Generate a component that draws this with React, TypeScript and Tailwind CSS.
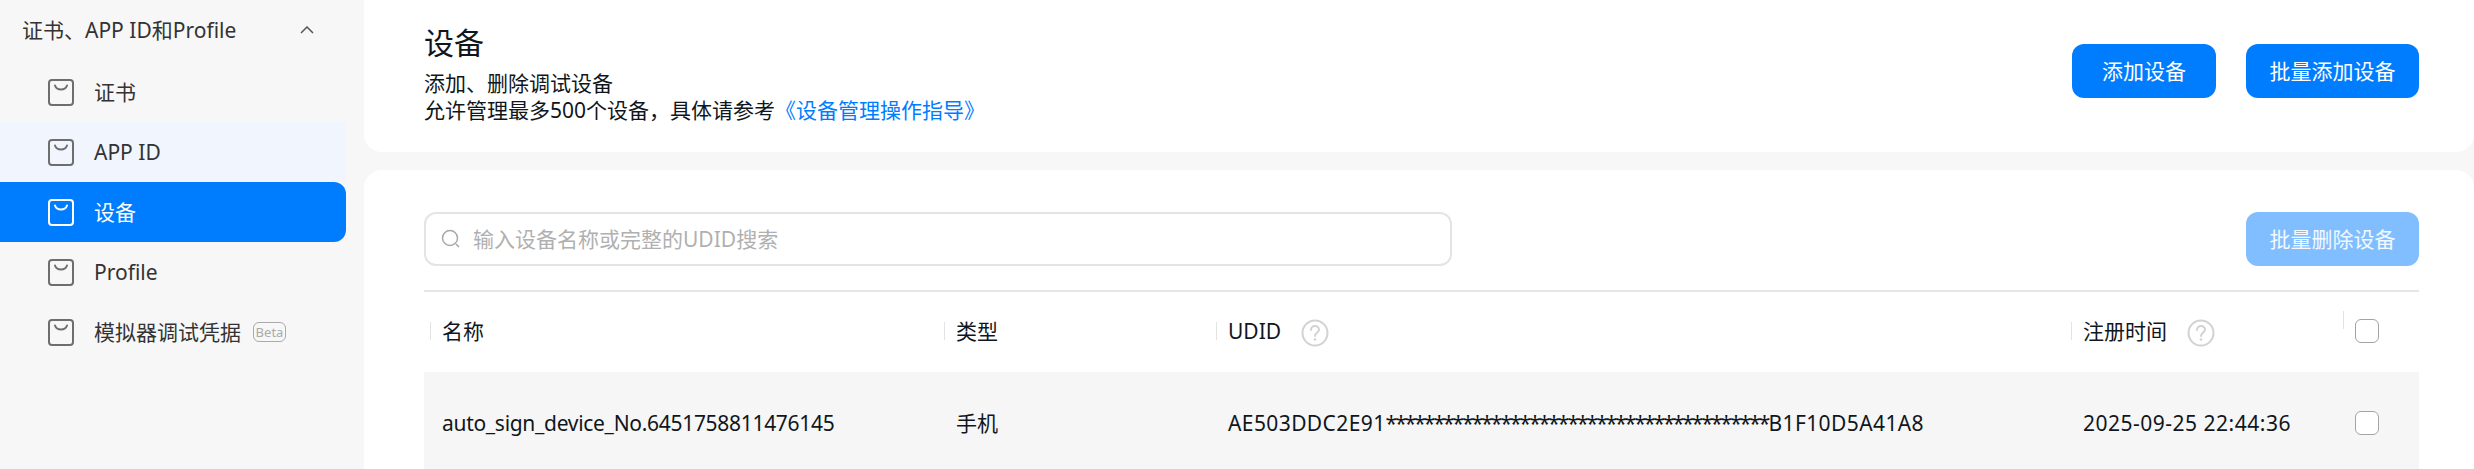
import React from "react";

function BagIcon({ active }: { active?: boolean }) {
  const c = active ? "#ffffff" : "#6e6e6e";
  return (
    <svg width="28" height="28" viewBox="0 0 28 28" fill="none" className="shrink-0">
      <rect x="2" y="2" width="24" height="25" rx="3" stroke={c} strokeWidth="2" />
      <path d="M8 7.5c1 3 3 4 6 4s5-1 6-4" stroke={c} strokeWidth="2" strokeLinecap="round" />
    </svg>
  );
}

function Help() {
  return (
    <svg width="28" height="28" viewBox="0 0 28 28" fill="none" className="shrink-0">
      <circle cx="14" cy="14" r="12.5" stroke="#d2d2d2" strokeWidth="2" />
      <path d="M10 11c0-2.4 1.8-4 4-4s4 1.5 4 3.6c0 3-4 3.2-4 6.4" stroke="#d2d2d2" strokeWidth="2" strokeLinecap="round" />
      <circle cx="14" cy="20.5" r="1.3" fill="#d2d2d2" />
    </svg>
  );
}

function Checkbox() {
  return <span className="block w-6 h-6 rounded-[6px] border-[1.5px] border-[#a3a3a8] bg-white" />;
}

function NavItem({ label, active, hover, beta }: { label: string; active?: boolean; hover?: boolean; beta?: boolean }) {
  const cls = active
    ? "bg-[#007dff] text-white rounded-r-[12px]"
    : hover
      ? "bg-[#f1f5fd] text-[#333333]"
      : "text-[#333333]";
  return (
    <div className={`h-[60px] w-[346px] flex items-center pl-[47px] ${cls}`}>
      <BagIcon active={active} />
      <span className="ml-[19px]">{label}</span>
      {beta && (
        <span className="ml-3 h-5 w-[33px] flex items-center justify-center rounded-[6px] border-[1.5px] border-[#aaaaaa] text-[#aaaaaa] text-[13px] leading-none">
          Beta
        </span>
      )}
    </div>
  );
}

function HeadCell({ children, w }: { children: React.ReactNode; w: string }) {
  return (
    <div className={`${w} flex items-center pl-[6px]`}>
      <span className="w-px h-[18px] bg-[#e3e3e3] mr-[11px]" />
      {children}
    </div>
  );
}

export default function App() {
  return (
    <div
      className="h-[469px] w-[2474px] overflow-hidden flex bg-[#f7f7f7] text-[21px] leading-[27px] text-[#10161c]"
      style={{ fontFamily: '"Noto Sans", "Noto Sans CJK SC", sans-serif' }}
    >
      <aside className="w-[364px] shrink-0">
        <div className="h-[62px] pl-[22px] pr-[50px] flex items-center justify-between text-[#333333] pb-[2px]">
          <span>证书、APP ID和Profile</span>
          <svg width="14" height="8" viewBox="0 0 14 8" fill="none">
            <path d="M1 7l6-6 6 6" stroke="#555555" strokeWidth="1.5" />
          </svg>
        </div>
        <NavItem label="证书" />
        <NavItem label="APP ID" hover />
        <NavItem label="设备" active />
        <NavItem label="Profile" />
        <NavItem label="模拟器调试凭据" beta />
      </aside>

      <main className="flex-1 flex flex-col gap-[18px]">
        <section className="h-[152px] shrink-0 bg-white rounded-b-[18px] pl-[60px] pr-[55px] flex justify-between">
          <div className="pt-[20px]">
            <h1 className="text-[30px] leading-[45px] font-normal">设备</h1>
            <p className="mt-[5px]">添加、删除调试设备</p>
            <p>
              允许管理最多500个设备{"\uFF0C"}具体请参考<span className="text-[#007dff]">《设备管理操作指导》</span>
            </p>
          </div>
          <div className="flex gap-[30px] pt-[44px]">
            <button className="h-[54px] w-[144px] rounded-[12px] bg-[#007dff] text-white">添加设备</button>
            <button className="h-[54px] w-[173px] rounded-[12px] bg-[#007dff] text-white">批量添加设备</button>
          </div>
        </section>

        <section className="flex-1 bg-white rounded-t-[18px] pl-[60px] pr-[55px] pt-[42px]">
          <div className="flex justify-between items-center">
            <div className="h-[54px] w-[1028px] rounded-[12px] border-2 border-[#e4e4e8] flex items-center pl-[15px]">
              <svg width="20" height="20" viewBox="0 0 20 20" fill="none">
                <circle cx="9" cy="9" r="7.5" stroke="#a8a8a8" strokeWidth="1.5" />
                <path d="M15 15l3 3" stroke="#a8a8a8" strokeWidth="1.5" />
              </svg>
              <span className="ml-[12px] text-[#b0b0b0]">输入设备名称或完整的UDID搜索</span>
            </div>
            <button className="h-[54px] w-[173px] rounded-[12px] bg-[#80beff] text-white/90">批量删除设备</button>
          </div>
          <div className="mt-[24px] h-[2px] bg-[#e6e6e6]" />
          <div className="h-[80px] flex items-center pb-[2px]">
            <HeadCell w="w-[514px]">名称</HeadCell>
            <HeadCell w="w-[272px]">类型</HeadCell>
            <HeadCell w="w-[855px]">
              UDID
              <span className="ml-5 mt-[3px]"><Help /></span>
            </HeadCell>
            <HeadCell w="w-[272px]">
              注册时间
              <span className="ml-5 mt-[3px]"><Help /></span>
            </HeadCell>
            <div className="w-[82px] flex items-center pl-[6px]">
              <span className="w-px h-[18px] bg-[#e3e3e3] mr-[11px] -mt-[22px]" />
              <Checkbox />
            </div>
          </div>
          <div className="h-[102px] bg-[#f6f6f6] flex items-center">
            <div className="w-[514px] pl-[18px] tracking-[-0.3px]">auto_sign_device_No.6451758811476145</div>
            <div className="w-[272px] pl-[18px]">手机</div>
            <div className="w-[855px] pl-[18px] whitespace-nowrap tracking-[0.4px]">
              AE503DDC2E91<span className="tracking-[-2px]">****************************************</span>B1F10D5A41A8
            </div>
            <div className="w-[272px] pl-[18px] tracking-[0.5px] whitespace-nowrap">2025-09-25 22:44:36</div>
            <div className="w-[82px] pl-[18px]"><Checkbox /></div>
          </div>
        </section>
      </main>
    </div>
  );
}
